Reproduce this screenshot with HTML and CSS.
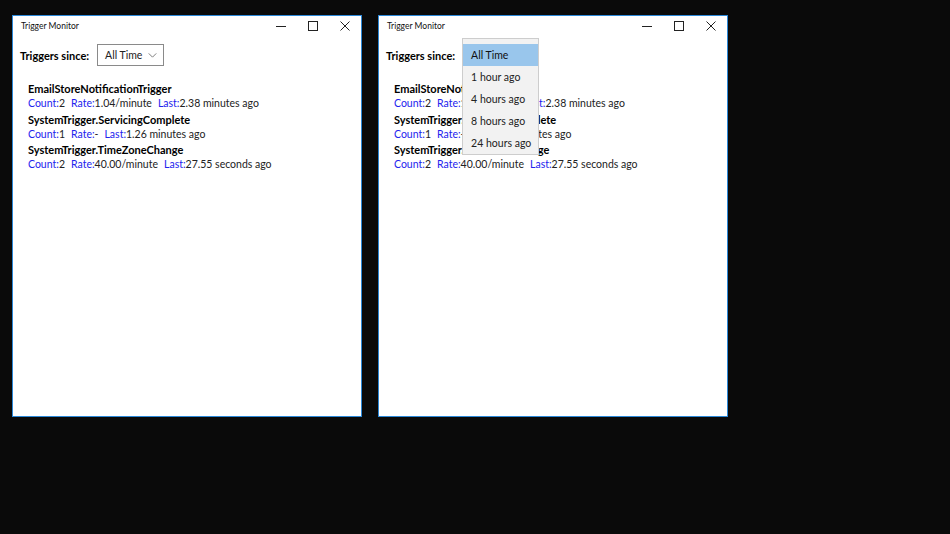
FILE: index.html
```html
<!DOCTYPE html>
<html>
<head>
<meta charset="utf-8">
<link rel="stylesheet" href="styles.css">
</head>
<body>
<div class="desktop">
  <div class="window">
    <div class="titlebar">
      <span class="title">Trigger Monitor</span>
      <div class="controls">
        <svg class="ctl" viewBox="0 0 10 10"><path d="M0 5.5H10" /></svg>
        <svg class="ctl" viewBox="0 0 10 10"><rect x="0.5" y="0.5" width="9" height="9" /></svg>
        <svg class="ctl" viewBox="0 0 10 10"><path d="M0.5 0.5L9.5 9.5M9.5 0.5L0.5 9.5" /></svg>
      </div>
    </div>
    <div class="content">
      <div class="filter">
        <span class="label">Triggers since:</span>
        <div class="combo"><span>All Time</span><svg class="chev" viewBox="0 0 10 6"><path d="M0.5 0.5L5 5L9.5 0.5" /></svg></div>
      </div>
      <div class="list">
        <div class="item">
          <div class="name">EmailStoreNotificationTrigger</div>
          <div class="stats"><span class="k">Count:</span>2<span class="k sp">Rate:</span>1.04/minute<span class="k sp">Last:</span>2.38 minutes ago</div>
        </div>
        <div class="item">
          <div class="name">SystemTrigger.ServicingComplete</div>
          <div class="stats"><span class="k">Count:</span>1<span class="k sp">Rate:</span>-<span class="k sp">Last:</span>1.26 minutes ago</div>
        </div>
        <div class="item">
          <div class="name">SystemTrigger.TimeZoneChange</div>
          <div class="stats"><span class="k">Count:</span>2<span class="k sp">Rate:</span>40.00/minute<span class="k sp">Last:</span>27.55 seconds ago</div>
        </div>
      </div>
    </div>
  </div>
  <div class="window">
    <div class="titlebar">
      <span class="title">Trigger Monitor</span>
      <div class="controls">
        <svg class="ctl" viewBox="0 0 10 10"><path d="M0 5.5H10" /></svg>
        <svg class="ctl" viewBox="0 0 10 10"><rect x="0.5" y="0.5" width="9" height="9" /></svg>
        <svg class="ctl" viewBox="0 0 10 10"><path d="M0.5 0.5L9.5 9.5M9.5 0.5L0.5 9.5" /></svg>
      </div>
    </div>
    <div class="content">
      <div class="filter">
        <span class="label">Triggers since:</span>
        <div class="combo open">
          <span>All Time</span>
          <div class="dropdown">
            <div class="opt sel">All Time</div>
            <div class="opt">1 hour ago</div>
            <div class="opt">4 hours ago</div>
            <div class="opt">8 hours ago</div>
            <div class="opt">24 hours ago</div>
          </div>
        </div>
      </div>
      <div class="list">
        <div class="item">
          <div class="name">EmailStoreNotificationTrigger</div>
          <div class="stats"><span class="k">Count:</span>2<span class="k sp">Rate:</span>1.04/minute<span class="k sp">Last:</span>2.38 minutes ago</div>
        </div>
        <div class="item">
          <div class="name">SystemTrigger.ServicingComplete</div>
          <div class="stats"><span class="k">Count:</span>1<span class="k sp">Rate:</span>-<span class="k sp">Last:</span>1.26 minutes ago</div>
        </div>
        <div class="item">
          <div class="name">SystemTrigger.TimeZoneChange</div>
          <div class="stats"><span class="k">Count:</span>2<span class="k sp">Rate:</span>40.00/minute<span class="k sp">Last:</span>27.55 seconds ago</div>
        </div>
      </div>
    </div>
  </div>
</div>
</body>
</html>
```
FILE: styles.css
```css
html, body {
  margin: 0;
  padding: 0;
  background: #0a0a0a;
  width: 950px;
  height: 534px;
  overflow: hidden;
}
.desktop {
  display: flex;
  gap: 16px;
  padding: 15px 0 0 12px;
  font-family: Lato, "Open Sans", sans-serif;
  color: #000;
}
.window {
  width: 348px;
  height: 400px;
  background: #fff;
  border: 1px solid #2b88d8;
  box-sizing: content-box;
  display: flex;
  flex-direction: column;
}
.titlebar {
  height: 20px;
  display: flex;
  align-items: center;
  justify-content: space-between;
  padding: 0 0 0 8px;
}
.title {
  font-size: 8.5px;
  color: #111;
}
.controls {
  display: flex;
}
.ctl {
  width: 10px;
  height: 10px;
  padding: 0 11px;
  fill: none;
  stroke: #222;
  stroke-width: 1;
}
.content {
  padding: 8px 0 0 7px;
  position: relative;
}
.filter {
  display: flex;
  align-items: center;
  gap: 8px;
}
.label {
  font-size: 11px;
  font-weight: 700;
}
.combo {
  position: relative;
  width: 67px;
  height: 22px;
  border: 1.5px solid #8a8a8a;
  display: flex;
  align-items: center;
  justify-content: space-between;
  padding: 0 6px 0 7px;
  box-sizing: border-box;
  font-size: 10.5px;
  color: #222;
  white-space: nowrap;
}
.combo.open {
  border-color: transparent;
}
.chev {
  width: 9px;
  height: 5px;
  flex: none;
  fill: none;
  stroke: #666;
  stroke-width: 1;
}
.dropdown {
  position: absolute;
  left: -2px;
  top: -7.5px;
  width: 77px;
  background: #f2f2f2;
  border: 1px solid #cdcdcd;
  box-sizing: border-box;
  padding: 5px 0 0;
}
.opt {
  height: 22px;
  line-height: 22px;
  padding-left: 8px;
  font-size: 10.5px;
  color: #222;
}
.opt.sel {
  background: #99c6ec;
  color: #111;
}
.list {
  padding: 15px 0 0 8px;
  display: flex;
  flex-direction: column;
  gap: 0;
}
.item .name {
  font-size: 11px;
  font-weight: 700;
  line-height: 15px;
}
.item .stats {
  font-size: 10.5px;
  line-height: 15.5px;
  color: #222;
}
.k {
  color: #2222ee;
}
.sp {
  margin-left: 6px;
}
```
